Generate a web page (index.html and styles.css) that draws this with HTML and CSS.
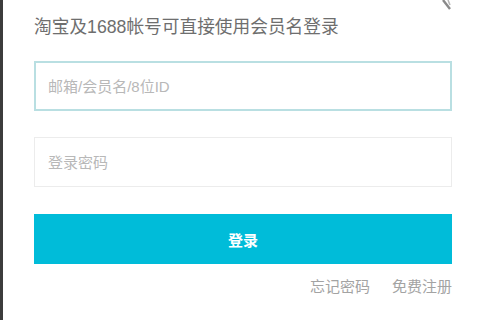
FILE: index.html
```html
<!DOCTYPE html>
<html lang="zh-CN">
<head>
    <meta charset="UTF-8">
    <meta name="viewport" content="width=device-width, initial-scale=1.0">
    <title>会员名登录</title>
    <link rel="stylesheet" href="styles.css">
</head>
<body>
    <div class="page">
        <svg class="corner" width="12" height="12" viewBox="0 0 12 12">
            <path d="M3 0 L10 9" stroke="#8a8a8a" stroke-width="2.4" fill="none"/>
            <path d="M8 0 L10 5" stroke="#b5b5b5" stroke-width="1.5" fill="none"/>
        </svg>
        <p class="tip">淘宝及1688帐号可直接使用会员名登录</p>
        <form class="login-form">
            <input class="field field-focus" type="text" placeholder="邮箱/会员名/8位ID">
            <input class="field" type="password" placeholder="登录密码">
            <button type="button" class="submit">登录</button>
        </form>
        <div class="links">
            <a href="#">忘记密码</a>
            <a href="#">免费注册</a>
        </div>
        <p class="other">使用合作网站帐号登录</p>
    </div>
</body>
</html>
```

FILE: styles.css
```css
* {
    box-sizing: border-box;
}
html, body {
    margin: 0;
    height: 100%;
    overflow: hidden;
    background: #fff;
}
body {
    font-family: "Liberation Sans", "Noto Sans CJK SC", sans-serif;
    color: #666;
}
.page {
    position: relative;
    height: 100%;
    border-left: 3px solid #3c3c3c;
    padding: 0 28px 0 31px;
}
.corner {
    position: absolute;
    top: 0;
    right: 28px;
}
.tip {
    margin: 0;
    padding-top: 17px;
    font-size: 17.7px;
    line-height: 20px;
    color: #6e6e6e;
}
.login-form {
    display: flex;
    flex-direction: column;
    gap: 26px;
    margin-top: 24px;
}
.field {
    display: block;
    width: 100%;
    height: 50px;
    padding: 0 13px;
    border: 1px solid #ececec;
    background: #fff;
    font-family: inherit;
    font-size: 15px;
    color: #333;
    outline: none;
}
.field::placeholder {
    color: #b8b8b8;
}
.field-focus {
    border: 2px solid #b9dfe2;
    padding: 0 12px;
}
.submit {
    height: 50px;
    margin-top: 1px;
    border: none;
    background: #00bcd9;
    color: #fff;
    font-family: inherit;
    font-size: 15px;
    font-weight: bold;
    cursor: pointer;
}
.links {
    display: flex;
    justify-content: flex-end;
    gap: 22px;
    margin-top: 14px;
}
.links a {
    font-size: 15px;
    line-height: 18px;
    color: #a3a3a3;
    text-decoration: none;
}
.other {
    margin: 21px 0 0;
    padding-left: 2px;
    font-size: 15px;
    color: #d8d8d8;
}
```
